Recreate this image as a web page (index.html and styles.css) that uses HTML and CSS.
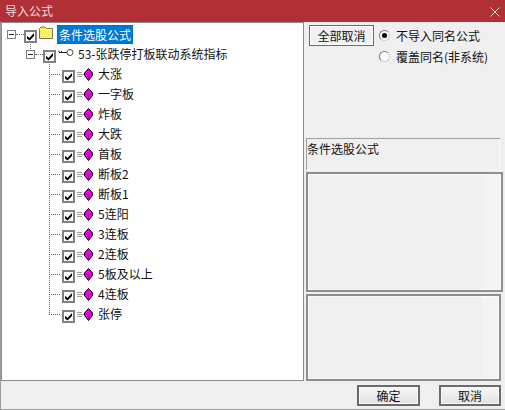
FILE: index.html
```html
<!DOCTYPE html>
<html lang="zh">
<head>
<meta charset="utf-8">
<title>导入公式</title>
<link rel="stylesheet" href="styles.css">
</head>
<body>
<svg class="defs" width="0" height="0" aria-hidden="true">
  <symbol id="chk" viewBox="0 0 9 9"><path d="M1 3.800 3.500 6 8 1V4L3.500 8.500 1 6.500Z" fill="#000"/></symbol>
  <symbol id="gem" viewBox="0 0 17 13">
    <path d="M1 4.500H6M1 6.500H8M1 8.500H6" stroke="#a0a0a0" stroke-width="1" fill="none"/>
    <path d="M12.500 .5 16.500 5V7.500L12.500 12.500 8.500 7.500V5Z" fill="#f400f0" stroke="#000" stroke-width="1"/>
    <path d="M9.500 5.500 12.500 7.500 15.500 5.500M12.500 7.500V11" stroke="#8c0f8a" stroke-width=".8" fill="none"/>
  </symbol>
</svg>
<main class="dialog">
  <header class="titlebar">
    <span class="title">导入公式</span>
    <svg class="close" width="10" height="10" viewBox="0 0 10 10"><path d="M.5.500 9.500 9.500M9.500.500.500 9.500" stroke="#f0dcdc" stroke-width="1" fill="none"/></svg>
  </header>
  <div class="body">
    <section class="tree">
      <div class="row root">
        <span class="expander"><i></i></span>
        <span class="hdots"></span>
        <span class="check"><svg width="9" height="9"><use href="#chk"/></svg></span>
        <svg class="folder" width="16" height="13" viewBox="0 0 16 13">
          <path d="M1.500 2.500 3 1H7L8.500 2.500H14.500V12.500H1.500Z" fill="#f4ea3c" stroke="#77775a"/>
          <path d="M2.500 3.500H13.500" stroke="#fff"/>
          <path d="M3 5H14M2 7H14M3 9H14M2 11H14" stroke="#fffbc0" stroke-dasharray="1 1"/>
        </svg>
        <span class="selected">条件选股公式</span>
      </div>
      <div class="row group">
        <span class="expander"><i></i></span>
        <span class="hdots"></span>
        <span class="check"><svg width="9" height="9"><use href="#chk"/></svg></span>
        <svg class="key" width="16" height="9" viewBox="0 0 16 9">
          <circle cx="12" cy="4.500" r="3" fill="#fff" stroke="#444"/>
          <path d="M9 4.500H1V2.500M3.500 4.500V3" stroke="#222" fill="none"/>
        </svg>
        <span class="label">53-张跌停打板联动系统指标</span>
      </div>
      <ul class="children">
        <li class="row child"><span class="elbow"></span><span class="check"><svg width="9" height="9"><use href="#chk"/></svg></span><svg class="gem" width="17" height="13"><use href="#gem"/></svg><span class="label">大涨</span></li>
        <li class="row child"><span class="elbow"></span><span class="check"><svg width="9" height="9"><use href="#chk"/></svg></span><svg class="gem" width="17" height="13"><use href="#gem"/></svg><span class="label">一字板</span></li>
        <li class="row child"><span class="elbow"></span><span class="check"><svg width="9" height="9"><use href="#chk"/></svg></span><svg class="gem" width="17" height="13"><use href="#gem"/></svg><span class="label">炸板</span></li>
        <li class="row child"><span class="elbow"></span><span class="check"><svg width="9" height="9"><use href="#chk"/></svg></span><svg class="gem" width="17" height="13"><use href="#gem"/></svg><span class="label">大跌</span></li>
        <li class="row child"><span class="elbow"></span><span class="check"><svg width="9" height="9"><use href="#chk"/></svg></span><svg class="gem" width="17" height="13"><use href="#gem"/></svg><span class="label">首板</span></li>
        <li class="row child"><span class="elbow"></span><span class="check"><svg width="9" height="9"><use href="#chk"/></svg></span><svg class="gem" width="17" height="13"><use href="#gem"/></svg><span class="label">断板2</span></li>
        <li class="row child"><span class="elbow"></span><span class="check"><svg width="9" height="9"><use href="#chk"/></svg></span><svg class="gem" width="17" height="13"><use href="#gem"/></svg><span class="label">断板1</span></li>
        <li class="row child"><span class="elbow"></span><span class="check"><svg width="9" height="9"><use href="#chk"/></svg></span><svg class="gem" width="17" height="13"><use href="#gem"/></svg><span class="label">5连阳</span></li>
        <li class="row child"><span class="elbow"></span><span class="check"><svg width="9" height="9"><use href="#chk"/></svg></span><svg class="gem" width="17" height="13"><use href="#gem"/></svg><span class="label">3连板</span></li>
        <li class="row child"><span class="elbow"></span><span class="check"><svg width="9" height="9"><use href="#chk"/></svg></span><svg class="gem" width="17" height="13"><use href="#gem"/></svg><span class="label">2连板</span></li>
        <li class="row child"><span class="elbow"></span><span class="check"><svg width="9" height="9"><use href="#chk"/></svg></span><svg class="gem" width="17" height="13"><use href="#gem"/></svg><span class="label">5板及以上</span></li>
        <li class="row child"><span class="elbow"></span><span class="check"><svg width="9" height="9"><use href="#chk"/></svg></span><svg class="gem" width="17" height="13"><use href="#gem"/></svg><span class="label">4连板</span></li>
        <li class="row child last"><span class="elbow"></span><span class="check"><svg width="9" height="9"><use href="#chk"/></svg></span><svg class="gem" width="17" height="13"><use href="#gem"/></svg><span class="label">张停</span></li>
      </ul>
    </section>
    <aside class="side">
      <div class="options">
        <button class="btn all" type="button">全部取消</button>
        <div class="radios">
          <div class="radio-row"><span class="radio on"></span><span>不导入同名公式</span></div>
          <div class="radio-row"><span class="radio"></span><span>覆盖同名(非系统)</span></div>
        </div>
      </div>
      <div class="info">条件选股公式</div>
      <div class="box one"></div>
      <div class="box two"></div>
    </aside>
  </div>
  <footer class="footer">
    <button class="btn ok" type="button">确定</button>
    <button class="btn cancel" type="button">取消</button>
  </footer>
</main>
</body>
</html>
```
FILE: styles.css
```css
* { box-sizing: border-box; }
html, body { margin: 0; padding: 0; }
body {
  width: 505px;
  height: 410px;
  overflow: hidden;
  font: 12px/16px "Noto Sans CJK SC", "Liberation Sans", sans-serif;
  color: #111;
  background: #efefef;
}
.defs { display: block; height: 0; }
.dialog {
  width: 505px;
  height: 410px;
  display: flex;
  flex-direction: column;
  border: solid #9c9c9c;
  border-width: 0 0 1px 1px;
}
.titlebar {
  height: 22px;
  margin-left: -1px;
  background: #b03036;
  color: #f0dcdc;
  display: flex;
  align-items: center;
  justify-content: space-between;
  padding: 0 5px 1px 5px;
  flex: none;
}
.close { margin-top: 2px; }
.body {
  height: 359px;
  display: flex;
  flex: none;
}
.tree {
  width: 303px;
  flex: none;
  background: #fff;
  border: 1px solid #8c8c8c;
  padding-top: 1px;
}
.row {
  height: 20px;
  display: flex;
  align-items: center;
}
.expander {
  width: 9px;
  height: 9px;
  border: 1px solid #808080;
  background: #fff;
  display: flex;
  align-items: center;
  justify-content: center;
  flex: none;
}
.expander i { width: 5px; height: 1px; background: #222; }
.hdots { width: 8px; border-top: 1px dotted #666; }
.check {
  width: 13px;
  height: 13px;
  border: 2px solid #808080;
  background: #fff;
  flex: none;
  display: flex;
  align-items: center;
  justify-content: center;
  margin-top: 5px;
}
.check svg { display: block; }
.root { padding-left: 5px; }
.folder { margin: -3px 0 0 1px; flex: none; }
.selected {
  margin-left: 3px;
  height: 19px;
  padding: 0 1px;
  line-height: 17px;
  background: #0078d7;
  color: #fff;
  border: 1px dotted #7a4a10;
}
.group {
  padding-left: 24px;
  background: repeating-linear-gradient(to bottom, #666 0 1px, transparent 1px 2px) 28px 0 / 1px 6px no-repeat;
}
.key { margin: -3px 0 0 2px; flex: none; }
.group .label { margin-left: 4px; }
.children {
  list-style: none;
  margin: 0;
  padding: 0 0 0 47px;
}
.child .elbow {
  width: 12px;
  height: 20px;
  flex: none;
  align-self: flex-start;
  background:
    repeating-linear-gradient(to bottom, #666 0 1px, transparent 1px 2px) left top / 1px 100% no-repeat,
    repeating-linear-gradient(to right, #666 0 1px, transparent 1px 2px) left 10px / 100% 1px no-repeat;
}
.child.last .elbow {
  background:
    repeating-linear-gradient(to bottom, #666 0 1px, transparent 1px 2px) left top / 1px 10px no-repeat,
    repeating-linear-gradient(to right, #666 0 1px, transparent 1px 2px) left 10px / 100% 1px no-repeat;
}
.child .check { margin-left: 1px; }
.gem { margin: 0 0 0 1px; flex: none; }
.child .label { margin-left: 5px; }
.side {
  flex: 1;
  min-width: 0;
  padding: 3px 0 0 2px;
  display: flex;
  flex-direction: column;
}
.options { display: flex; height: 113px; padding-left: 3px; flex: none; }
.btn {
  font: inherit;
  color: #111;
  padding: 0;
  background: linear-gradient(#f6f6f6, #e2e2e2);
  border: 2px solid #6a6a6a;
  box-shadow: inset 0 0 0 1px #f8f8f8;
}
.all {
  width: 65px;
  height: 21px;
  border-width: 1px;
  background: #f0f0f0;
  box-shadow: inset 0 0 0 1px #fff;
  flex: none;
}
.radios { margin-left: 5px; display: flex; flex-direction: column; }
.radio-row { display: flex; align-items: center; height: 21px; }
.radio-row span:last-child { margin-left: 6px; }
.radio {
  width: 11px;
  height: 11px;
  border-radius: 50%;
  border: 1px solid;
  border-color: #7a7a7a #d0d0d0 #d0d0d0 #7a7a7a;
  background: #fbfbfb;
  flex: none;
  display: flex;
  align-items: center;
  justify-content: center;
}
.radio.on::after {
  content: "";
  width: 5px;
  height: 5px;
  border-radius: 50%;
  background: #000;
}
.info {
  width: 194px;
  height: 32px;
  flex: none;
  border: solid #a0a0a0;
  border-width: 1px 0 0 1px;
  background: #efefef;
  box-shadow: inset -1px -1px 0 #fafafa;
  line-height: 20px;
}
.box {
  border: 2px solid #8e8e8e;
  box-shadow: inset 0 0 0 1px #f9f9f9;
  flex: none;
}
.one {
  width: 197px;
  height: 120px;
  margin-top: 2px;
  background: linear-gradient(to right, #efefef 176px, #f4f3f2 176px);
}
.two {
  width: 195px;
  height: 87px;
  margin-top: 2px;
  background: linear-gradient(to right, #efefef 174px, #f4f3f2 174px);
}
.footer {
  flex: 1;
  display: flex;
  justify-content: flex-end;
  align-items: flex-start;
  padding: 4px 4px 0 0;
  gap: 19px;
}
.ok { height: 21px; width: 63px; }
.cancel { height: 21px; width: 62px; }
```
